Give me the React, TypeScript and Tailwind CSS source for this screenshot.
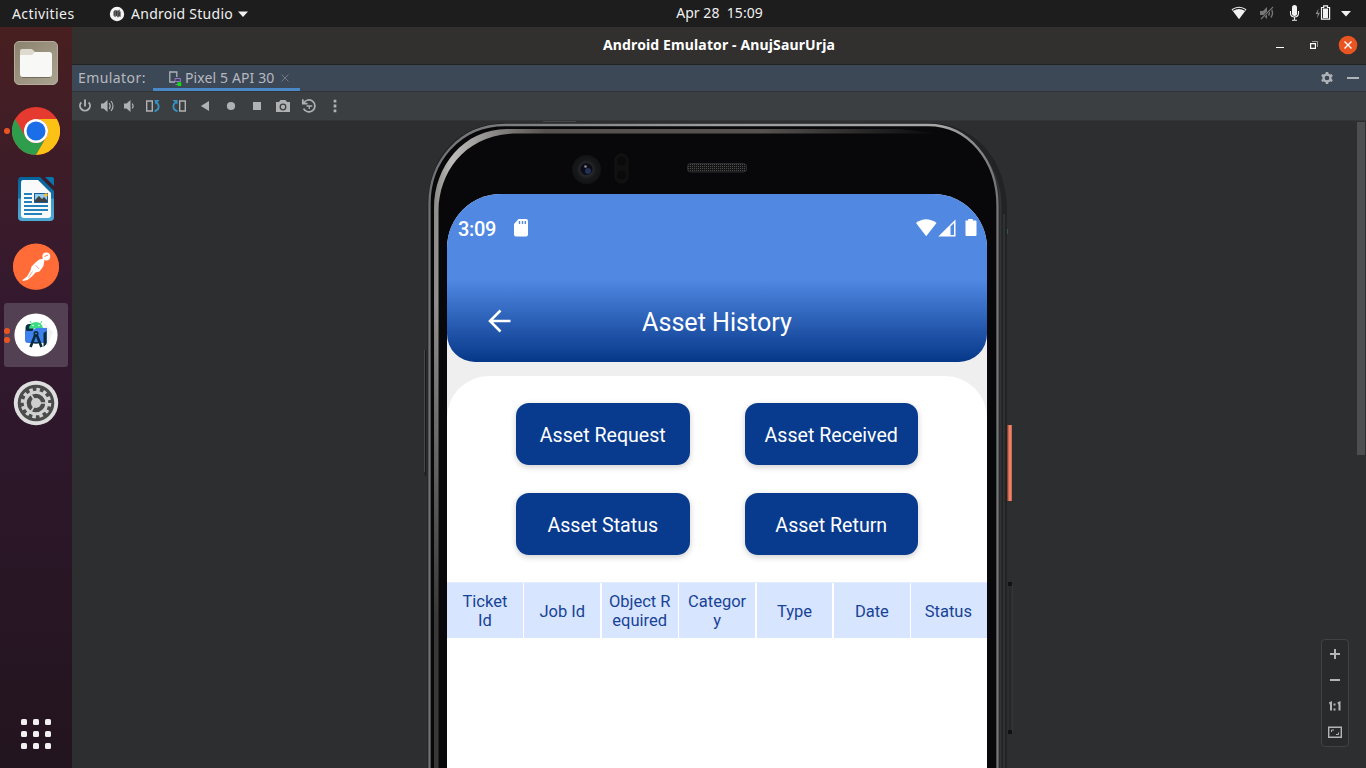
import React from "react";

const UI = "font-['Noto_Sans','Open_Sans',sans-serif]";
const ROBOTO = "font-[Roboto,sans-serif]";

function TopBar() {
  return (
    <header className={`${UI} flex h-[27px] shrink-0 items-center bg-[#1d1d1d] text-[14px] leading-none text-[#f0f0f0]`}>
      <div className="flex w-[454px] items-center pl-3">
        <span className="w-[97px] whitespace-nowrap tracking-[0.42px]">Activities</span>
        <svg className="h-4 w-4" viewBox="0 0 16 16">
          <circle cx="8" cy="8" r="7.2" fill="#f4f4f4" />
          <path d="M4.300 5.800L6 3.800 8 4.500 10.500 3.600 11.700 6V11.300L10 10.600 9 11.800 7.500 10 6 11.200 4.300 9.500Z" fill="#777" />
          <path d="M5.800 5v4.500M7.500 4.800v5M9.200 5v5.500M10.700 6v4" stroke="#292929" strokeWidth=".8" />
        </svg>
        <span className="ml-1.5 w-[102px] whitespace-nowrap tracking-[0.28px]">Android Studio</span>
        <svg className="ml-1 h-2 w-3" viewBox="0 0 12 8"><path d="M1 1.5h10L6 7Z" fill="#f0f0f0" /></svg>
      </div>
      <div className="grow pb-px text-center"><span className="ml-[5px] whitespace-pre text-[14px] tracking-[0.05px]">Apr 28  15:09</span></div>
      <div className="flex w-[386px] justify-end">
        <svg className="h-[27px] w-[136px]" viewBox="1230 0 136 27">
          <path d="M1231.5 9.2Q1239 4.2 1246.5 9.2L1239 19.3Z" fill="#f2f2f2" />
          <path d="M1233 10.2Q1239 6.5 1245 10.2" stroke="#1d1d1d" strokeWidth="1.1" fill="none" />
          <g fill="none" stroke="#777" strokeWidth="1.4">
            <path d="M1260 11h3l4-4v12l-4-4h-3Z" fill="#777" stroke="none" />
            <path d="M1268.5 10.5q1.8 2.5 0 5M1271 8.500q3 4.500 0 9" />
            <path d="M1261 19L1273 7" stroke="#1d1d1d" strokeWidth="2" />
            <path d="M1261 19L1273 7" strokeWidth="1.1" />
          </g>
          <rect x="1292" y="5" width="5" height="11" rx="2.5" fill="#f2f2f2" />
          <path d="M1290.5 11v2q0 4 4 4t4-4v-2M1294.5 17v3.3M1292 20.3h5" fill="none" stroke="#f2f2f2" strokeWidth="1.1" />
          <path d="M1318.6 8.5l-3 5.5h2.2l-.8 4.5 3-5.8h-2.200Z" fill="#888" />
          <path d="M1321.5 7.5h2.2V5.8h3.8v1.700h2.100V19.2h-8.100Z" fill="none" stroke="#f2f2f2" strokeWidth="1.2" />
          <rect x="1323" y="8.5" width="5" height="9.5" fill="#f2f2f2" />
          <path d="M1341 11h10l-5 5.500Z" fill="#f2f2f2" />
        </svg>
      </div>
    </header>
  );
}

const FilesIcon = () => (
  <svg className="h-12 w-12" viewBox="0 0 48 48">
    <defs><linearGradient id="files" x2="1" y2="1"><stop stopColor="#8c836f" /><stop offset="1" stopColor="#aaa38f" /></linearGradient></defs>
    <rect x="2.500" y="2.500" width="43" height="43" rx="4.500" fill="url(#files)" stroke="#b3ac9a" />
    <path d="M8 35V12q0-2 2-2h9q1.500 0 2.500 1.500L23 13h14q2 0 2 2v18Z" fill="#dedad0" />
    <path d="M8 16h12l3-3h14q3 0 3 2.500V35q0 3-3 3H11q-3 0-3-3Z" fill="#f8f8f6" />
    <path d="M10 38.500h28" stroke="#716b5b" />
  </svg>
);

const ChromeIcon = () => (
  <svg className="h-12 w-12" viewBox="0 0 48 48">
    <circle cx="24" cy="24" r="24" fill="#e53a30" />
    <path d="M3.200 12A24 24 0 0 0 24 48L34.400 30A12 12 0 0 1 13.600 30Z" fill="#2f9e4c" />
    <path d="M24 48A24 24 0 0 0 44.800 12H24A12 12 0 0 1 34.400 30Z" fill="#fcc115" />
    <circle cx="24" cy="24" r="12" fill="#fff" />
    <circle cx="24" cy="24" r="9.500" fill="#1a6fe8" />
  </svg>
);

const WriterIcon = () => (
  <svg className="h-12 w-12" viewBox="0 0 48 48">
    <defs><linearGradient id="writer" x2="0" y2="1"><stop stopColor="#06639b" /><stop offset=".48" stopColor="#1475aa" /><stop offset=".5" stopColor="#3c9cca" /><stop offset="1" stopColor="#4caad5" /></linearGradient></defs>
    <path d="M9 2H28L42 16V42q0 4-4 4H10q-4 0-4-4V6q0-4 3-4Z" fill="url(#writer)" />
    <path d="M11 5H26L39 18v22q0 3-3 3H12q-3 0-3-3V8q0-3 2-3Z" fill="#fafafa" />
    <path d="M33 2h7q2 0 2 2v7Z" fill="#0875ad" />
    <path d="M12 19h8M12 23h8M12 27h8M12 31h24M12 35h24M12 39h18" stroke="#2382ba" strokeWidth="2" />
    <rect x="22.500" y="18.500" width="13" height="9" fill="#93cbea" stroke="#145f9c" />
    <path d="M23 27v-2l4-4 3 3 2-2 3 3v2Z" fill="#414141" /><circle cx="34" cy="20" r="1.800" fill="#ffbd24" />
  </svg>
);

const PostmanIcon = () => (
  <svg className="h-12 w-12" viewBox="0 0 48 48">
    <circle cx="24" cy="24" r="23" fill="#db552a" /><circle cx="24" cy="23.500" r="23" fill="#ff6c37" />
    <circle cx="34.300" cy="13.500" r="3.900" fill="#fff" />
    <path d="M32.500 16Q28 15 24 19L19.500 23.500 18.500 27.500 15 33.500 10.500 37 11 38 15.500 37 20.500 33 23.500 29.500 27.500 28.500 31.500 23Z" fill="#fff" />
    <path d="M23.500 22l3.500 4M20.500 28.500l-4 6" stroke="#ff6c37" strokeWidth=".6" />
    <path d="M32.500 13.500l3.500-1.500" stroke="#ff6c37" strokeWidth=".9" />
  </svg>
);

const StudioIcon = () => (
  <svg className="h-12 w-12" viewBox="0 0 48 48">
    <circle cx="24" cy="24" r="21.600" fill="#fff" />
    <path d="M32 12l9 9-6 15Z" fill="#f1f1f1" />
    <path d="M13.500 17q0-4 4-4h4v7h-8Z" fill="#083042" />
    <path d="M17 17.500q1-6.500 7-6.500t7 6.500Z" fill="#3ddc84" /><path d="M19.500 12.500l-1.500-2.500M28.500 12.500l1.500-2.500" stroke="#3ddc84" />
    <circle cx="21" cy="14.500" r=".7" fill="#fff" /><circle cx="27" cy="14.500" r=".7" fill="#fff" />
    <path d="M13 18q0 2 4 2h3l4-3h11v15H16q-3 0-3-3Z" fill="#3f80ee" />
    <path d="M24 22L18.500 36M24 22l5.500 14" stroke="#082b3d" strokeWidth="2.600" /><path d="M20.500 31q3.500 2 7 0" stroke="#082b3d" strokeWidth="1.500" fill="none" />
    <circle cx="24" cy="22.500" r="2.500" fill="#082b3d" /><circle cx="24" cy="22.500" r=".8" fill="#72a5ef" />
    <path d="M31.500 22l3-2v13l-3 3Z" fill="#082b3d" />
  </svg>
);

const SettingsIcon = () => (
  <svg className="h-12 w-12" viewBox="0 0 48 48">
    <circle cx="24" cy="24" r="22.200" fill="#dedede" /><circle cx="24" cy="24" r="18.300" fill="#4b4b4b" />
    <circle cx="24" cy="24" r="13.500" fill="none" stroke="#d2d2d2" strokeWidth="3.500" strokeDasharray="3.500 3.569" />
    <circle cx="24" cy="24" r="10.800" fill="none" stroke="#d2d2d2" strokeWidth="3" />
    <circle cx="24" cy="24" r="5" fill="#cfcfcf" />
    <path d="M28 24h7M22 27.500l-3.500 6M22 20.500l-3.500-6" stroke="#cfcfcf" strokeWidth="1.700" />
  </svg>
);

function DockItem({ children, dots = 0, active = false }: { children: React.ReactNode; dots?: number; active?: boolean }) {
  return (
    <div className={`relative flex h-16 w-16 items-center justify-center rounded-[3px] ${active ? "bg-[#534052]" : ""}`}>
      {dots > 0 && (
        <div className="absolute left-0 flex flex-col gap-[3px]">
          {Array.from({ length: dots }, (_, i) => <i key={i} className="h-1.5 w-1.5 rounded-full bg-[#e95420]" />)}
        </div>
      )}
      {children}
    </div>
  );
}

function Dock() {
  return (
    <nav className="flex w-[72px] shrink-0 flex-col items-center bg-linear-to-b from-[#481f20] via-[#32182f] via-40% to-[#22141e] pt-1">
      <div className="flex flex-col gap-1">
        <DockItem><FilesIcon /></DockItem>
        <DockItem dots={1}><ChromeIcon /></DockItem>
        <DockItem><WriterIcon /></DockItem>
        <DockItem><PostmanIcon /></DockItem>
        <DockItem dots={2} active><StudioIcon /></DockItem>
        <DockItem><SettingsIcon /></DockItem>
      </div>
      <div className="mt-auto mb-[19px] grid grid-cols-3 gap-1.5">
        {Array.from({ length: 9 }, (_, i) => <i key={i} className="h-1.5 w-1.5 rounded-[1.5px] bg-[#f2eff0]" />)}
      </div>
    </nav>
  );
}

function TitleBar() {
  return (
    <div className="flex h-[38px] shrink-0 items-center border-b border-[#222] bg-[#322f2f]">
      <div className="w-[160px]" />
      <div className={`${UI} grow pb-0.5 text-center text-[14px] font-bold leading-none tracking-[0.13px] text-white`}>Android Emulator - AnujSaurUrja</div>
      <svg className="mb-px h-9 w-[160px]" viewBox="1206 27 160 36">
        <path d="M1276 47.500h8" stroke="#fff" />
        <path d="M1310.600 43.600h4.800v4.800h-4.800Z" fill="none" stroke="#fff" strokeWidth="1.200" />
        <path d="M1312 41.500h5.500V47" fill="none" stroke="#999" />
        <circle cx="1348" cy="45" r="9.300" fill="#e95420" />
        <path d="M1344.500 41.500l7 7M1351.500 41.500l-7 7" stroke="#fff" strokeWidth="1.400" />
      </svg>
    </div>
  );
}

function TabBar() {
  return (
    <div className={`${UI} flex h-[27px] shrink-0 items-center border-b border-[#303338] bg-[#3d4857] text-[14px] leading-none text-[#b5b9bf]`}>
      <span className="w-[81px] whitespace-nowrap pl-1.5 tracking-[0.42px]">Emulator:</span>
      <div className="flex h-full w-[147px] items-center border-b-[3px] border-[#4a88c7] pl-[15px] pt-[3px]">
        <svg className="h-4 w-[17px]" viewBox="168 70 17 16">
          <path d="M175 82h-5.200V72h7v5" fill="none" stroke="#aeb3b8" strokeWidth="1.300" />
          <path d="M175 78.500h5.500v3H175Z" fill="none" stroke="#9b72c7" /><path d="M175.500 84.500h2" stroke="#9b72c7" />
          <rect x="177.500" y="82.300" width="3.700" height="3.700" fill="#08e408" />
        </svg>
        <span className="w-[90px] whitespace-nowrap tracking-[0.12px]">Pixel 5 API 30</span>
        <svg className="ml-1.5 h-2 w-2" viewBox="0 0 8 8"><path d="M.5.5l7 7M7.500.5l-7 7" stroke="#717982" /></svg>
      </div>
      <svg className="ml-auto h-[26px] w-[60px]" viewBox="1306 65 60 26">
        <circle cx="1327" cy="78" r="3.500" fill="none" stroke="#b0b4b8" strokeWidth="2.300" />
        <g stroke="#b0b4b8" strokeWidth="2.600"><path d="M1327 72v2.300M1327 81.700V84M1321.800 75l2 1.200M1330.200 79.800l2 1.200M1321.800 81l2-1.200M1330.200 76.200l2-1.200" /></g>
        <path d="M1347 78h12" stroke="#b0b4b8" strokeWidth="2" />
      </svg>
    </div>
  );
}

function ToolBar() {
  return (
    <div className="flex h-[29px] shrink-0 border-b border-[#333537] bg-[#3c3f41]">
      <svg className="h-7 w-[288px]" viewBox="72 92 288 28" fill="none" stroke="#afb1b3" strokeWidth="1.600">
        <path d="M85 99.500v7M81.300 102.300a5 5 0 1 0 7.400 0" strokeWidth="1.900" />
        <path d="M101 103.500h2.500l4-3.500v12l-4-3.500H101ZM124 103.500h2.500l4-3.500v12l-4-3.500H124Z" fill="#afb1b3" stroke="none" />
        <path d="M109.200 103q2 3 0 6M111 101q4 5 0 10M132.200 103.500q1.800 2.500 0 5" strokeWidth="1.200" />
        <path d="M146.700 101h5.600v10h-5.600ZM179.700 101h5.600v10h-5.600Z" strokeWidth="1.400" />
        <path d="M154.500 111.300q5-1.800 4-5.800-.5-2-2-3M177.500 111.300q-5-1.800-4-5.800.5-2 2-3" stroke="#3592c4" strokeWidth="1.900" />
        <path d="M154.500 100h5L155.500 104.500ZM172.500 100h5v4.500Z" fill="#3592c4" stroke="none" />
        <path d="M209 101v10l-8.200-5Z" fill="#afb1b3" stroke="none" />
        <circle cx="231" cy="106" r="4.100" fill="#afb1b3" stroke="none" />
        <rect x="253" y="102" width="8" height="8" fill="#afb1b3" stroke="none" />
        <path d="M276 102h3l1.500-2h5l1.500 2h3v10h-14Z" fill="#afb1b3" stroke="none" />
        <circle cx="283" cy="107" r="2.800" fill="#afb1b3" stroke="#3c3f41" strokeWidth="1.300" />
        <path d="M303.700 103a6 6 0 1 1-.1 5.600M302.800 99.200v4.500h4.700" strokeWidth="1.700" />
        <path d="M306.500 106h3.500M309.300 105.300v3.700M309.300 106h3" strokeWidth="1.300" />
        <path d="M335 99.800v2.800M335 104.600v2.800M335 109.400v2.800" strokeWidth="2.700" />
      </svg>
    </div>
  );
}

function PhoneFrame() {
  return (
    <svg className="absolute left-[350px] top-0 h-[647px] w-[594px]" viewBox="422 121 594 647" fill="none">
      <defs>
        <linearGradient id="edge" x1="428" x2="1000" y1="0" y2="0" gradientUnits="userSpaceOnUse">
          <stop stopColor="#6f7174" /><stop offset=".5" stopColor="#9b9da0" /><stop offset=".9" stopColor="#a7a7a7" /><stop offset="1" stopColor="#727374" />
        </linearGradient>
        <linearGradient id="shine" x1="434" x2="940" y1="0" y2="0" gradientUnits="userSpaceOnUse">
          <stop stopColor="#8b8986" /><stop offset=".035" stopColor="#bdbcba" /><stop offset=".13" stopColor="#858381" /><stop offset=".22" stopColor="#555250" /><stop offset=".65" stopColor="#555250" /><stop offset="1" stopColor="#080809" />
        </linearGradient>
        <linearGradient id="sideFade" x1="0" x2="0" y1="300" y2="620" gradientUnits="userSpaceOnUse">
          <stop stopColor="#09090a" stopOpacity="0" /><stop offset="1" stopColor="#09090a" stopOpacity=".65" />
        </linearGradient>
        <radialGradient id="lens"><stop stopColor="#1a1c24" /><stop offset=".45" stopColor="#25272a" /><stop offset=".65" stopColor="#18191b" /><stop offset="1" stopColor="#121314" /></radialGradient>
        <pattern id="mesh" width="2" height="2" patternUnits="userSpaceOnUse"><rect width="2" height="2" fill="#151515" /><path d="M0 0h1v1H0Z" fill="#4b4b4b" /></pattern>
      </defs>
      <path d="M543 121.500h33" stroke="#464548" />
      <path d="M425.500 350v126" stroke="#1b1c1d" strokeWidth="1.500" /><path d="M424.500 350v122" stroke="#66686a" strokeWidth=".5" />
      <path d="M427.500 780V206C427.500 156 460 123 505 123H928C974 123 1007 158 1007 212V780Z" fill="#222324" />
      <path d="M1000.500 780V206C1000.500 165 969 126 927 126" stroke="#323334" strokeWidth="2" />
      <path d="M1004 780V214" stroke="#303132" strokeWidth="2" />
      <path d="M429.500 780V204C429.500 162 459 125 505 125H928C968 125 997.500 160 997.500 206V780Z" fill="#08080a" stroke="url(#edge)" strokeWidth="2.300" />
      <path d="M434 780V208C434 166 464 129 507 129H900L940 133.500H518C466 133.500 439 171 438.500 211V780Z" fill="url(#shine)" />
      <path d="M434 300h5v468h-5Z" fill="url(#sideFade)" />
      <path d="M1009.800 425v76" stroke="#ed8266" strokeWidth="4" /><path d="M1008 425v76" stroke="#a9472f" />
      <path d="M1010 582v152" stroke="#27282a" strokeWidth="2" /><path d="M1012.500 584v148" stroke="#3b3c3d" strokeWidth=".5" />
      <path d="M1008 582h4v4h-4ZM1008 730h4v4h-4Z" fill="#111" />
      <path d="M1007.500 229v5" stroke="#35564c" />
      <circle cx="586.500" cy="169.500" r="14.500" fill="url(#lens)" />
      <circle cx="586.500" cy="169" r="6" fill="#0b0d16" /><circle cx="588" cy="171" r="3" fill="#253055" /><circle cx="585.500" cy="166.500" r="1.300" fill="#8a8c96" />
      <rect x="615" y="154" width="13" height="29" rx="6.500" fill="#101011" stroke="#151516" />
      <circle cx="621.500" cy="161" r="4.500" fill="#0a0a0b" /><circle cx="621.500" cy="175" r="4.500" fill="#0a0a0b" />
      <rect x="687.500" y="163.500" width="59" height="8.500" rx="3" fill="url(#mesh)" stroke="#2d2d2d" />
    </svg>
  );
}

function AssetButton({ label }: { label: string }) {
  return (
    <button className="h-[62px] w-[173.5px] rounded-[13px] bg-[#083b8e] pt-[3px] text-[19.6px] leading-none text-white shadow-[0_2px_6px_rgba(0,0,0,0.2)]">
      {label}
    </button>
  );
}

const columns = [["Ticket", "Id"], ["Job Id"], ["Object R", "equired"], ["Categor", "y"], ["Type"], ["Date"], ["Status"]];

function PhoneScreen() {
  return (
    <div className={`${ROBOTO} relative ml-[375px] mt-[73px] flex h-[574px] w-[540px] shrink-0 flex-col overflow-hidden rounded-t-[54px] bg-[#efefef]`}>
      <div className="h-[168px] shrink-0 rounded-b-[28px] bg-linear-to-b from-[#5088e2] from-[51%] via-[#2a5fb5] via-[76%] to-[#063889]">
        <div className="flex h-[68px] items-center px-[11px] text-white">
          <span className="w-[54.5px] pt-0.5 text-[20px] font-medium leading-none tracking-[-0.35px]">3:09</span>
          <svg className="h-[18px] w-4" viewBox="0 0 16 18">
            <path d="M5.500 0H13q2 0 2 2v13.500q0 2-2 2H3q-2 0-2-2V5Z" fill="#fff" />
            <path d="M6.500 2v3M9.500 2v3M12.300 2v3" stroke="#5088e2" strokeWidth="1.400" />
          </svg>
          <svg className="ml-auto mr-[-1px] h-[18px] w-[61px]" viewBox="916 219 61 18">
            <path d="M916 223Q926 215.500 936.500 223L926.200 236.200Z" fill="#fff" />
            <path d="M955.500 219.500v17H938.300Z" fill="#fff" /><path d="M950.500 226.500l3.500-3.500v12h-3.500Z" fill="#5088e2" />
            <path d="M965.500 220.500h2.700v-1.500h4.600v1.500h2.700q1 0 1 1V235q0 1-1 1h-9q-1 0-1-1Z" fill="#fff" />
          </svg>
        </div>
        <div className="grid h-[100px] grid-cols-[140px_260px_140px] items-center pt-[19px] text-white">
          <svg className="ml-[41px] mt-[-2px] h-6 w-6" viewBox="0 0 24 24" fill="none" stroke="#fff" strokeWidth="2.600"><path d="M22.500 12H2.500M12.500 1.500L2 12l10.500 10.500" /></svg>
          <h1 className="pt-0.5 text-center text-[25.1px] leading-none">Asset History</h1>
          <span />
        </div>
      </div>
      <div className="mt-3.5 flex grow flex-col rounded-t-[42px] bg-white">
        <div className="grid grid-cols-[173.5px_173.5px] gap-x-[55px] gap-y-[27.5px] pl-[69px] pt-[27.4px]">
          <AssetButton label="Asset Request" />
          <AssetButton label="Asset Received" />
          <AssetButton label="Asset Status" />
          <AssetButton label="Asset Return" />
        </div>
        <div className="mt-[27.1px] grid h-[56px] grid-cols-[repeat(6,75.9px)_74px] gap-x-[1.5px] border-t border-[#e4edff] bg-linear-to-r from-white from-[98%] to-[#d8e5ff] to-[98%]">
          {columns.map((lines) => (
            <div key={lines[0]} className="flex flex-col items-center justify-center bg-[#d8e5ff] pt-0.5 text-[16.5px] leading-[19.5px] text-[#174396]">
              {lines.map((line) => <span key={line} className="whitespace-nowrap">{line}</span>)}
            </div>
          ))}
        </div>
      </div>
    </div>
  );
}

function ZoomControls() {
  return (
    <div className="absolute bottom-[21px] right-[17px] flex h-[108px] w-7 rounded-[4px] border border-[#414244] bg-[#292a2b]">
      <svg className="h-[106px] w-[26px]" viewBox="1322 640 26 106" fill="none" stroke="#b2b4b6">
        <path d="M1330 654h10M1335 649v10M1330 680h10" strokeWidth="2" />
        <path d="M1329.300 703.500l1.700-.8v7.800M1337.800 703.500l1.700-.8v7.800" strokeWidth="2" />
        <path d="M1334.500 703.500v2M1334.500 708.500v2" strokeWidth="2" />
        <path d="M1328.700 727.200h12.600v10h-12.600Z" strokeWidth="1.400" />
        <path d="M1331.500 732v-2h2.500M1338.500 732.500v2H1336" />
      </svg>
    </div>
  );
}

export default function App() {
  return (
    <div className="flex h-[768px] w-[1366px] flex-col overflow-hidden bg-[#2d2f31]">
      <TopBar />
      <div className="flex min-h-0 grow">
        <Dock />
        <main className="flex min-w-0 grow flex-col">
          <TitleBar />
          <TabBar />
          <ToolBar />
          <section className="relative flex min-h-0 grow items-start overflow-hidden bg-[#2d2e30]">
            <PhoneFrame />
            <PhoneScreen />
            <div className="ml-auto h-full w-2.5"><div className="mt-px ml-px h-[333px] w-2 bg-[#4d4e50]" /></div>
            <ZoomControls />
          </section>
        </main>
      </div>
    </div>
  );
}
